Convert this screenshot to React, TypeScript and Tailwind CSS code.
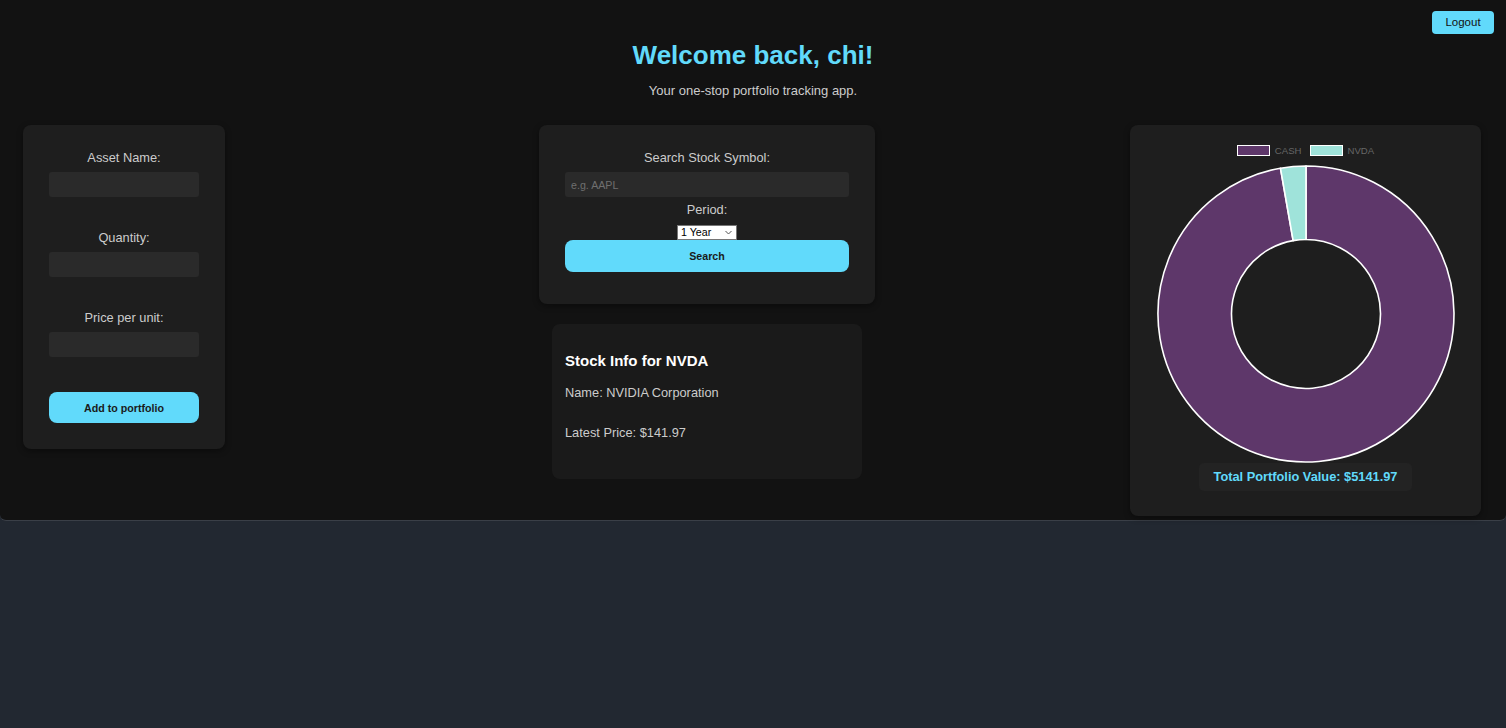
import React from "react";

const Label = ({ children, className = "" }: { children: React.ReactNode; className?: string }) => (
  <div className={`text-center text-[12.8px] leading-[15px] text-[#cccccc] ${className}`}>{children}</div>
);

const Input = ({ placeholder, className = "" }: { placeholder?: string; className?: string }) => (
  <div
    className={`h-[25px] w-full rounded-[3px] bg-[#2a2a2a] flex items-center px-[6px] text-[10.67px] text-[#6f6f6f] ${className}`}
  >
    {placeholder}
  </div>
);

function Donut() {
  const cashPath =
    "M150 2 A148 148 0 1 1 124.45 4.22 L137.14 76.62 A74.5 74.5 0 1 0 150 75.5 Z";
  const nvdaPath =
    "M124.45 4.22 A148 148 0 0 1 150 2 L150 75.5 A74.5 74.5 0 0 0 137.14 76.62 Z";
  return (
    <svg width="300" height="300" viewBox="0 0 300 300" className="block">
      <path d={cashPath} fill="#5e376a" stroke="#ffffff" strokeWidth="1.6" strokeLinejoin="round" />
      <path d={nvdaPath} fill="#9fe3da" stroke="#ffffff" strokeWidth="1.6" strokeLinejoin="round" />
    </svg>
  );
}

export default function App() {
  return (
    <div className="min-h-screen bg-[#222831] font-['Liberation_Sans',Arial,sans-serif]">
      <div className="h-[521px] bg-[#121212] rounded-b-[6px] border-b border-[#3a3f47] flex flex-col">
        <div className="flex justify-end pt-[11px] pr-[12px]">
          <button className="h-[23px] w-[62px] rounded-[4px] bg-[#61dafb] text-[11.5px] text-[#111] flex items-center justify-center">
            Logout
          </button>
        </div>
        <h1 className="mt-[6px] text-center text-[26px] leading-[30px] font-bold text-[#61dafb]">
          Welcome back, chi!
        </h1>
        <p className="mt-[13px] text-center text-[13px] leading-[15px] text-[#cccccc]">
          Your one-stop portfolio tracking app.
        </p>

        <div className="mt-[27px] flex items-start pl-[23px] pr-[25px]">
          {/* Left card */}
          <div className="w-[202px] rounded-[8px] bg-[#1e1e1e] px-[26px] pt-[25px] pb-[26px] shadow-[0_2px_6px_rgba(0,0,0,0.4)]">
            <Label>Asset Name:</Label>
            <Input className="mt-[7px]" />
            <Label className="mt-[33px]">Quantity:</Label>
            <Input className="mt-[7px]" />
            <Label className="mt-[33px]">Price per unit:</Label>
            <Input className="mt-[7px]" />
            <button className="mt-[35px] h-[31px] w-full rounded-[8px] bg-[#61dafb] text-[10.67px] font-bold text-[#1a1a1a]">
              Add to portfolio
            </button>
          </div>

          {/* Middle column */}
          <div className="ml-[314px] w-[336px] flex flex-col items-center">
            <div className="w-full rounded-[8px] bg-[#1e1e1e] px-[26px] pt-[25px] pb-[32px] flex flex-col items-center shadow-[0_2px_6px_rgba(0,0,0,0.4)]">
              <Label>Search Stock Symbol:</Label>
              <Input className="mt-[7px]" placeholder="e.g. AAPL" />
              <Label className="mt-[5px]">Period:</Label>
              <div className="mt-[8px] h-[15px] w-[60px] bg-white border border-[#767676] flex items-center justify-between pl-[3px] pr-[4px]">
                <span className="text-[10.67px] leading-[13px] text-black">1 Year</span>
                <svg width="7" height="5" viewBox="0 0 7 5">
                  <path d="M0.5 1 L3.5 4 L6.5 1" fill="none" stroke="#555" strokeWidth="1" />
                </svg>
              </div>
              <button className="h-[32px] w-full rounded-[8px] bg-[#61dafb] text-[10.67px] font-bold text-[#1a1a1a]">
                Search
              </button>
            </div>

            <div className="mt-[20px] w-[310px] h-[155px] rounded-[8px] bg-[#1a1a1a] px-[13px] pt-[28px]">
              <h3 className="text-[15px] leading-[17px] font-bold text-white">Stock Info for NVDA</h3>
              <p className="mt-[16px] text-[12.8px] leading-[15px] text-[#cccccc]">Name: NVIDIA Corporation</p>
              <p className="mt-[25px] text-[12.8px] leading-[15px] text-[#cccccc]">Latest Price: $141.97</p>
            </div>
          </div>

          {/* Right card */}
          <div className="ml-auto w-[351px] rounded-[8px] bg-[#1e1e1e] pt-[20px] pb-[25px] flex flex-col items-center shadow-[0_2px_6px_rgba(0,0,0,0.4)]">
            <div className="flex items-center h-[11px]">
              <div className="h-[10.5px] w-[33px] bg-[#5e376a] border-[1.6px] border-white" />
              <span className="ml-[5px] text-[9.6px] leading-[11px] text-[#666666]">CASH</span>
              <div className="ml-[8px] h-[10.5px] w-[33px] bg-[#9fe3da] border-[1.6px] border-white" />
              <span className="ml-[5px] text-[9.6px] leading-[11px] text-[#666666]">NVDA</span>
            </div>
            <div className="mt-[8px]">
              <Donut />
            </div>
            <div className="-mt-[1px] h-[28px] w-[213px] rounded-[5px] bg-[#232323] flex items-center justify-center text-[12.8px] font-bold text-[#61dafb]">
              Total Portfolio Value: $5141.97
            </div>
          </div>
        </div>
      </div>
    </div>
  );
}
